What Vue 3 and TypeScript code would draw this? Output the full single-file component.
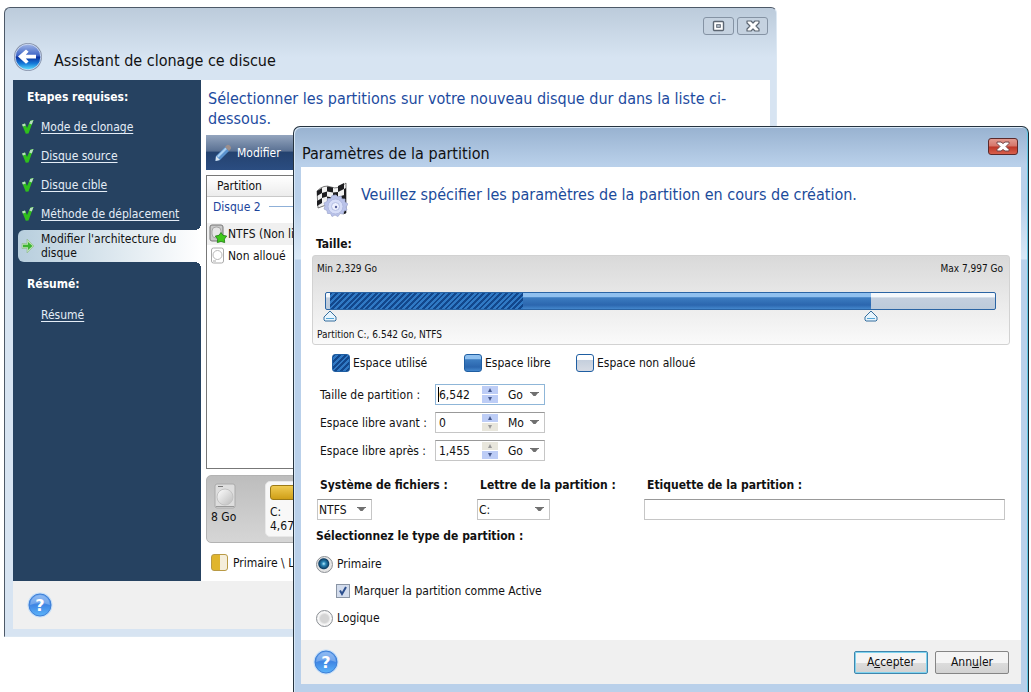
<script setup lang="ts">
import { ref, computed } from 'vue'

interface SizeField {
  id: string
  label: string
  value: string
  unit: string
  up: boolean
  down: boolean
}

const steps = ['Mode de clonage', 'Disque source', 'Disque cible', 'Méthode de déplacement']
const fields = ref<SizeField[]>([
  { id: 'size', label: 'Taille de partition :', value: '6,542', unit: 'Go', up: true, down: true },
  { id: 'before', label: 'Espace libre avant :', value: '0', unit: 'Mo', up: true, down: false },
  { id: 'after', label: 'Espace libre après :', value: '1,455', unit: 'Go', up: false, down: true },
])
const units = ['Mo', 'Go']
const total = 7.997
const used = 2.329
const start = ref(0)
const end = ref(6.542)
const usedWidth = computed(() => `${(used / total) * 100}%`)
const endWidth = computed(() => `${(end.value / total) * 100}%`)
const kind = ref('primary')
const active = ref(true)
const fileSystem = ref('NTFS')
const letter = ref('C:')
const volumeLabel = ref('')
</script>

<template>
  <main class="desktop">
    <section class="window wizard" aria-label="Assistant de clonage">
      <header class="wizard-head">
        <div class="caption">
          <button type="button" aria-label="Agrandir">
            <svg width="13" height="12" viewBox="0 0 13 12"><rect x="1.5" y="1.5" width="10" height="9" rx="1" fill="#fff" stroke="#5c6672" stroke-width="1.4" /><rect x="4.7" y="4.7" width="3.6" height="2.6" fill="#c4ced9" stroke="#5c6672" /></svg>
          </button>
          <button type="button" aria-label="Fermer">
            <svg width="14" height="12" viewBox="0 0 14 12"><path d="M1 1h4l2 2 2-2h4v2L10 6l3 3v2H9L7 9l-2 2H1V9l3-3-3-3z" fill="#fff" stroke="#5c6672" stroke-width="1.200" stroke-linejoin="round" /></svg>
          </button>
        </div>
        <div class="wizard-title">
          <button type="button" class="back" aria-label="Retour">
            <svg width="30" height="30" viewBox="0 0 30 30">
              <defs>
                <linearGradient id="bk" x1="0" y1="0" x2="0" y2="1"><stop offset="0" stop-color="#9fb4e6" /><stop offset=".46" stop-color="#3a62c4" /><stop offset=".5" stop-color="#0b2f9c" /><stop offset=".75" stop-color="#1478d8" /><stop offset="1" stop-color="#5fe2ff" /></linearGradient>
              </defs>
              <circle cx="15" cy="15" r="14" fill="#8793ab" />
              <circle cx="15" cy="15" r="12.800" fill="url(#bk)" stroke="#d6e2f6" stroke-width=".8" />
              <path d="M5 14.500 13 7.500l2.600 2.300-2.800 2.900H23v3.800H12.800l2.800 2.900-2.600 2.300z" fill="#fff" />
            </svg>
          </button>
          <h1>Assistant de clonage ce discue</h1>
        </div>
      </header>

      <div class="wizard-body">
        <nav class="sidebar">
          <h2>Etapes requises:</h2>
          <ul>
            <li v-for="s in steps" :key="s">
              <svg width="14" height="16" viewBox="0 0 14 16"><path d="M1 5.500 4 4.500 6 9 9.500 1.500 12.500 1 7.500 14.500 4.800 14.800z" fill="#2fc01c" /><path d="M9.200 2 12.500 1 10.800 5.500 8.300 4.500zM1 5.500 4 4.500 4.800 6.500 1.900 7.500z" fill="#b9dfc0" /></svg>
              <a href="#">{{ s }}</a>
            </li>
          </ul>
          <div class="current">
            <svg width="14" height="16" viewBox="0 0 14 16"><path d="M1 5.500h5V1l7 7-7 7v-4.500H1z" fill="#bfe3b7" stroke="#8ab889" stroke-width=".6" /><path d="M2 6.800h5V4l4.500 4L7 12V9.200H2z" fill="#3cb531" /></svg>
            <span>Modifier l'architecture du disque</span>
          </div>
          <h2>Résumé:</h2>
          <a class="summary" href="#">Résumé</a>
        </nav>

        <div class="content">
          <h2>Sélectionner les partitions sur votre nouveau disque dur dans la liste ci-dessous.</h2>
          <div class="toolbar">
            <button type="button">
              <svg width="18" height="18" viewBox="0 0 18 18"><path d="M2 12 11 3l4 4-9 9-4.500 1z" fill="#5b93cf" /><path d="M3 12 11.500 3.500l1.500 1.500-8.500 8.500z" fill="#a9cff2" /><path d="M11 3l2-2q1.500-.7 3 .8t.9 3L15 7z" fill="#9d8f8c" /><path d="M2 12l4 4-4.500 1z" fill="#dbe6f0" /></svg>
              Modifier
            </button>
          </div>
          <div class="list">
            <table>
              <thead><tr><th scope="col">Partition</th></tr></thead>
              <tbody>
                <tr class="group"><td><div><span>Disque 2</span><i></i></div></td></tr>
                <tr class="picked">
                  <td><div>
                    <svg width="18" height="20" viewBox="0 0 18 20"><rect x="1" y="1" width="13" height="16" rx="2" fill="#c9c9c9" stroke="#777" /><rect x="3" y="3" width="9" height="11" rx="4" fill="#e6e6e6" stroke="#a6a6a6" /><path d="m12 8.500 2 2.800 3.700.8-2.300 3 .3 3.500-3.700-1.100-3.700 1.100.3-3.500-2.300-3 3.700-.8z" fill="#3fc81b" stroke="#1f7a14" stroke-width=".8" /></svg>
                    <span>NTFS (Non libellé)</span>
                  </div></td>
                </tr>
                <tr>
                  <td><div>
                    <svg width="18" height="20" viewBox="0 0 18 20"><rect x="2.500" y="2" width="12" height="15" rx="2" fill="#fff" stroke="#aaa" /><circle cx="8.500" cy="9" r="4.500" fill="#fff" stroke="#b8b8b8" /><path d="M4 15h3" stroke="#aaa" /></svg>
                    <span>Non alloué</span>
                  </div></td>
                </tr>
              </tbody>
            </table>
          </div>
          <div class="disk">
            <div class="disk-name">
              <svg width="22" height="26" viewBox="0 0 22 26"><defs><linearGradient id="dk" x1="0" y1="0" x2="1" y2="1"><stop offset="0" stop-color="#fff" /><stop offset="1" stop-color="#bbb" /></linearGradient></defs><rect x="1" y="1" width="20" height="24" rx="2" fill="#dedede" stroke="#aaa" /><circle cx="11" cy="14" r="8" fill="url(#dk)" stroke="#c3c3c3" /><path d="M4 3.500h5" stroke="#777" /><path d="M2 23.500h18" stroke="#999" /></svg>
              <span>8 Go</span>
            </div>
            <div class="volume"><b></b><span>C:</span><span>4,67 Go</span></div>
          </div>
          <div class="key"><i></i><span>Primaire \ Logique</span></div>
        </div>
      </div>
      <footer>
        <button type="button" class="help" aria-label="Aide">
          <svg width="26" height="26" viewBox="0 0 26 26">
            <defs><linearGradient id="hp" x1="0" y1="0" x2="0" y2="1"><stop offset="0" stop-color="#6ea6ef" /><stop offset=".5" stop-color="#3f86e4" /><stop offset="1" stop-color="#5cb4fa" /></linearGradient></defs>
            <circle cx="13" cy="13" r="12.500" fill="#c4def8" /><circle cx="13" cy="13" r="11" fill="url(#hp)" stroke="#3e7fd6" /><path d="M3 13a10 10 0 0 1 20 0q-10-4-20 0z" fill="#fff" opacity=".25" />
            <text x="13" y="19" text-anchor="middle" class="q">?</text>
          </svg>
        </button>
      </footer>
    </section>

    <section class="window dialog" role="dialog" aria-labelledby="dlg-title">
      <header class="dialog-head">
        <h1 id="dlg-title">Paramètres de la partition</h1>
        <button type="button" class="close" aria-label="Fermer">
          <svg width="14" height="11" viewBox="0 0 14 11"><path d="M1 1h4l2 1.500L9 1h4v1.500L10 5.500l3 3V10H9L7 8.500 5 10H1V8.500l3-3-3-3z" fill="#fff" stroke="#73474a" stroke-width="1" stroke-linejoin="round" /></svg>
        </button>
      </header>

      <form class="dialog-body" @submit.prevent>
        <div class="intro">
          <svg width="32" height="36" viewBox="0 0 32 36">
            <path d="M1 9Q8 2 15 5T30 1V31L27 32V22Q20 23 14 23T2 26z" fill="#f2f2f2" stroke="#444" stroke-width=".7" />
            <path d="M1 9 6 6v5L1 14zM11 4.500l6 1v5l-6-1zM22 4l6-3v6l-6 3zM6 11l5-1.500v5L6 16zM17 10.500l5-.5v5l-5 .5zM1 19l5-3v5l-5 3zM11 14.500l6 1v5l-6-.5zM22 15l6-2v6l-6 2zM28 7l2-1v25l-2 1z" fill="#1d1d20" />
            <path d="m20 13 2 2 3-1 1 3 3 0v3l3 2-2 3 1 3-3 1-1 3-3-.5-2 3-3-1.500-3 1.500-1.500-3-3 0-.5-3-3-1.500 1-3-1-3 3-1.500.5-3 3 0 1.500-3z" fill="#b9c2ea" stroke="#a3acd2" stroke-width=".8" />
            <circle cx="19.500" cy="24.500" r="7.500" fill="#d6ddf8" stroke="#b0b9e0" /><circle cx="19.500" cy="24.500" r="4" fill="#eef1ff" stroke="#b4bee3" /><circle cx="20" cy="25" r="1.200" fill="#59629a" />
          </svg>
          <p>Veuillez spécifier les paramètres de la partition en cours de création.</p>
        </div>

        <h2 class="size-title">Taille:</h2>
        <div class="size-panel">
          <div class="limits"><span>Min 2,329 Go</span><span>Max 7,997 Go</span></div>
          <div class="bar-wrap">
            <div class="bar">
              <div class="scale">
                <div class="free" :style="{ width: endWidth }"></div>
                <div class="used" :style="{ width: usedWidth }"></div>
              </div>
            </div>
            <div class="handles">
              <input v-model.number="start" type="range" min="0" :max="total" step="0.001" aria-label="Début de la partition" />
              <input v-model.number="end" type="range" min="0" :max="total" step="0.001" aria-label="Fin de la partition" />
            </div>
          </div>
          <p>Partition C:, 6.542 Go, NTFS</p>
        </div>

        <ul class="legend">
          <li><i class="sw-used"></i>Espace utilisé</li>
          <li><i class="sw-free"></i>Espace libre</li>
          <li><i class="sw-none"></i>Espace non alloué</li>
        </ul>

        <div class="sizes">
          <div v-for="f in fields" :key="f.id" class="size-row">
            <label :for="f.id">{{ f.label }}</label>
            <div class="spin" :class="{ focused: f.id === 'size' }">
              <span v-if="f.id === 'size'" class="caret"></span>
              <input :id="f.id" v-model="f.value" type="text" />
              <span class="arrows">
                <button type="button" :class="{ off: !f.up }" aria-label="Augmenter"><svg width="6" height="4" viewBox="0 0 6 4"><path d="M3 0 5 4H1z" /></svg></button>
                <button type="button" :class="{ off: !f.down }" aria-label="Diminuer"><svg width="6" height="4" viewBox="0 0 6 4"><path d="M3 4 5 0H1z" /></svg></button>
              </span>
              <select v-model="f.unit" :aria-label="'Unité, ' + f.label"><option v-for="u in units" :key="u">{{ u }}</option></select>
            </div>
          </div>
        </div>

        <div class="props">
          <div class="prop"><label for="fs">Système de fichiers :</label><select id="fs" v-model="fileSystem" class="boxed fs"><option>NTFS</option><option>FAT32</option></select></div>
          <div class="prop"><label for="letter">Lettre de la partition :</label><select id="letter" v-model="letter" class="boxed letter"><option>C:</option><option>D:</option></select></div>
          <div class="prop wide"><label for="vol">Etiquette de la partition :</label><input id="vol" v-model="volumeLabel" type="text" class="boxed" /></div>
        </div>

        <fieldset>
          <legend>Sélectionnez le type de partition :</legend>
          <label class="opt"><input v-model="kind" type="radio" value="primary" name="kind" />Primaire</label>
          <label class="opt sub"><input v-model="active" type="checkbox" />Marquer la partition comme Active</label>
          <label class="opt"><input v-model="kind" type="radio" value="logical" name="kind" />Logique</label>
        </fieldset>
      </form>

      <footer>
        <button type="button" class="help" aria-label="Aide">
          <svg width="26" height="26" viewBox="0 0 26 26">
            <circle cx="13" cy="13" r="12.500" fill="#c4def8" /><circle cx="13" cy="13" r="11" fill="url(#hp)" stroke="#3e7fd6" /><path d="M3 13a10 10 0 0 1 20 0q-10-4-20 0z" fill="#fff" opacity=".25" />
            <text x="13" y="19" text-anchor="middle" class="q">?</text>
          </svg>
        </button>
        <div class="actions">
          <button type="button" class="btn primary">A<u>c</u>cepter</button>
          <button type="button" class="btn">Ann<u>u</u>ler</button>
        </div>
      </footer>
    </section>
  </main>
</template>

<style>
html,
body {
  margin: 0;
  background: #fff;
}
</style>

<style scoped>
* {
  box-sizing: border-box;
}
.desktop {
  position: relative;
  min-height: 100vh;
  overflow: hidden;
  font: 12px/16px "DejaVu Sans Condensed", "DejaVu Sans", sans-serif;
  color: #111;
}
h1, h2, p, ul {
  margin: 0;
  padding: 0;
  font-size: inherit;
  font-weight: normal;
}
ul {
  list-style: none;
}
button, input, select {
  margin: 0;
  padding: 0;
  border: 0;
  background: none;
  font: inherit;
  color: inherit;
  outline: 0;
}
svg {
  display: block;
  flex: none;
}
.window {
  position: absolute;
  display: flex;
  flex-direction: column;
}
.window h1 {
  font-size: 16px;
  line-height: 20px;
}
footer {
  display: flex;
  align-items: center;
  background: #f0f0f0;
}
.q {
  font: bold 16px "DejaVu Sans", sans-serif;
  fill: #fff;
}

.wizard {
  top: 7px;
  bottom: 55px;
  left: 4px;
  width: 75%;
  padding: 0 6px 7px 8px;
  border: 1px solid #4d5968;
  border-right-color: #dce8f3;
  border-bottom-color: #dce8f3;
  border-radius: 6px 6px 0 0;
  background: linear-gradient(#bccbdb, #d7e4f2 50px, #d7e4f2);
}
.wizard-head {
  height: 72px;
}
.caption {
  display: flex;
  justify-content: flex-end;
  gap: 3px;
  padding: 9px 2px 0;
}
.caption button {
  display: grid;
  place-items: center;
  width: 31px;
  height: 18px;
  border: 1px solid #8593a4;
  border-radius: 3px;
  background: #c5d2e0;
}
.wizard-title {
  display: flex;
  align-items: center;
  gap: 11px;
  margin-top: 7px;
}
.wizard-title h1 {
  padding-top: 7px;
}
.wizard-body {
  display: flex;
  flex: 1;
  min-height: 0;
  background: #fff;
}
.sidebar {
  flex: none;
  width: 188px;
  padding: 9px 0 0 5px;
  background: #264261;
  color: #fff;
}
.sidebar h2 {
  padding-left: 9px;
  font-weight: bold;
}
.sidebar ul {
  display: grid;
  gap: 13px;
  padding: 14px 0 8px 3px;
}
.sidebar li {
  display: flex;
  gap: 6px;
}
.sidebar a {
  color: #e4edf7;
  text-underline-offset: 2px;
}
.current {
  position: relative;
  display: flex;
  align-items: center;
  gap: 6px;
  margin-bottom: 14px;
  padding: 2px 12px 2px 3px;
  border-radius: 6px 0 0 6px;
  background: linear-gradient(90deg, #b7cedd, #fff);
  line-height: 14px;
  color: #111;
}
.current::before,
.current::after {
  content: "";
  position: absolute;
  right: 0;
  width: 6px;
  height: 6px;
}
.current::before {
  bottom: 100%;
  background: radial-gradient(circle at 0 0, #264261 6px, #fff 6px);
}
.current::after {
  top: 100%;
  background: radial-gradient(circle at 0 100%, #264261 6px, #fff 6px);
}
.summary {
  display: inline-block;
  margin: 15px 0 0 23px;
}
.content {
  display: flex;
  flex: 1;
  flex-direction: column;
  min-width: 0;
  padding: 9px 6px 10px 5px;
}
.content h2 {
  padding: 0 20px 0 2px;
  font-size: 16px;
  line-height: 20px;
  color: #1d4ba0;
}
.toolbar {
  display: flex;
  margin-top: 6px;
  height: 35px;
  background: linear-gradient(#94a5be, #5b7294 45%, #24426f 50%, #2b4d81);
}
.toolbar button {
  display: flex;
  align-items: center;
  gap: 5px;
  padding-left: 8px;
  color: #fff;
}
.list {
  flex: 1;
  margin-top: 5px;
  border: 1px solid #777;
}
.list table {
  width: 100%;
  border-collapse: collapse;
}
.list th,
.list td {
  height: 22px;
  padding: 0;
  font-weight: normal;
  text-align: left;
}
.list th {
  height: 20px;
  padding-left: 10px;
  border-bottom: 1px solid #c9c9c9;
  background: linear-gradient(#fff, #ececec);
}
.list td div {
  display: flex;
  align-items: center;
  gap: 1px;
  padding-left: 2px;
}
.list .group div {
  gap: 8px;
}
.list .group td {
  height: 27px;
  padding: 0 0 6px 4px;
  color: #1c449c;
}
.group i {
  flex: 1;
  height: 1px;
  background: #8fb0d8;
}
.picked {
  background: #f0f0f0;
}
.disk {
  display: flex;
  gap: 26px;
  margin-top: 6px;
  padding: 5px 4px;
  height: 68px;
  border: 1px solid #b3b3b3;
  border-radius: 5px;
  background: linear-gradient(#bdbdbd, #d6d6d6);
}
.disk-name {
  flex: none;
}
.disk-name svg {
  margin: 2px 3px 0;
}
.volume {
  display: flex;
  flex: 1;
  flex-direction: column;
  padding: 3px 4px;
  border: 1px solid #e8e8e8;
  border-radius: 5px;
  background: #f8f8f8;
  line-height: 14px;
}
.volume b {
  height: 18px;
  margin-bottom: 5px;
  border: 1px solid #9b7a17;
  border-radius: 3px;
  background: linear-gradient(#f0cb52, #cf9f17);
}
.key {
  display: flex;
  align-items: center;
  gap: 5px;
  margin: 11px 0 0 5px;
}
.key i {
  width: 17px;
  height: 17px;
  border: 1px solid #b99a45;
  border-radius: 3px;
  background: linear-gradient(90deg, #e0b52d 50%, #f5eedb 50%);
}
.wizard footer {
  height: 48px;
  padding-left: 14px;
}

.dialog {
  top: 126px;
  right: 2px;
  left: 293px;
  min-height: calc(100% - 126px);
  padding: 0 7px 8px;
  border: 1px solid #26333f;
  border-right: 1px solid #1f2a33;
  border-bottom: 0;
  border-radius: 7px 7px 0 0;
  background: linear-gradient(#98b2d0, #b9d0ea 38px, #b9d0ea 75px, #d9e8f7 132px, #b9d0ea 133px);
  box-shadow: inset 1px 1px #d7e7f6, inset -1px 0 #62c8e4;
}
.dialog-head {
  display: flex;
  align-items: flex-start;
  justify-content: space-between;
  height: 40px;
  padding: 11px 3px 0 1px;
}
.dialog-head h1 {
  padding-top: 6px;
}
.close {
  display: grid;
  place-items: center;
  width: 30px;
  height: 17px;
  border: 1px solid #5b2a2b;
  border-radius: 3px;
  background: linear-gradient(#e29a90, #d57468 48%, #bd3526 52%, #d8604c);
}
.dialog-body {
  flex: 1;
  padding: 15px 11px 0;
  background: #fff;
}
.intro {
  display: flex;
  gap: 13px;
  padding-left: 4px;
}
.intro p {
  padding-top: 3px;
  font-size: 16px;
  line-height: 20px;
  color: #1b4b9b;
}
.size-title {
  margin: 18px 0 3px 4px;
}
.size-title,
.prop label,
legend {
  font-weight: bold;
}
.size-panel {
  padding: 6px 4px 2px;
  border: 1px solid #d2d2d2;
  border-radius: 3px;
  background: linear-gradient(#d9d9d9, #fafafa);
  font-size: 10px;
  line-height: 14px;
}
.limits {
  display: flex;
  justify-content: space-between;
  padding-right: 2px;
}
.bar-wrap {
  margin: 16px 9px 6px 8px;
}
.bar {
  height: 18px;
  padding: 0 4px;
  border: 1px solid #2a64a4;
  border-radius: 2px;
  background: linear-gradient(#f4f8fc 25%, #c3cfde 30%, #bccada);
}
.scale {
  position: relative;
  height: 16px;
}
.free,
.used {
  position: absolute;
  top: 0;
  left: 0;
  height: 100%;
}
.free,
.sw-free {
  background: linear-gradient(#8fc0ef 22%, #3c7cc0 30%, #2b66ae 75%, #4487cc);
}
.used,
.sw-used {
  background: repeating-linear-gradient(135deg, #12478c 0 2px, #3079c4 2px 4px);
}
.handles {
  display: grid;
  margin: 0 -2px;
}
.handles input {
  grid-area: 1 / 1;
  width: 100%;
  height: 12px;
  appearance: none;
  pointer-events: none;
}
.handles input::-webkit-slider-thumb {
  width: 14px;
  height: 12px;
  appearance: none;
  pointer-events: auto;
  background: url("data:image/svg+xml,%3Csvg xmlns='http://www.w3.org/2000/svg' width='14' height='12'%3E%3Cpath d='M7 1 13 7v3l-1 1H2L1 10V7z' fill='%23e6f4fd' stroke='%23366f9e'/%3E%3Cpath d='M3 8.500h8' stroke='%2356a5d5'/%3E%3C/svg%3E");
}
.legend {
  display: grid;
  grid-template-columns: 132px 112px auto;
  margin: 9px 0 0 20px;
}
.legend li {
  display: flex;
  align-items: center;
  gap: 3px;
}
.legend i {
  width: 18px;
  height: 18px;
  border: 1px solid #1f5ea2;
  border-radius: 3px;
}
.sw-none {
  background: linear-gradient(#fff 28%, #c5cfdd 32%, #d6dbe4);
}
.sizes {
  display: grid;
  gap: 7px;
  margin: 12px 0 0 8px;
}
.size-row {
  display: flex;
  align-items: center;
}
.size-row label {
  width: 115px;
}
.spin,
.boxed {
  height: 21px;
  border: 1px solid #c6c6c6;
  border-top-color: #999;
  background-color: #fff;
}
.spin {
  display: flex;
  position: relative;
  width: 110px;
}
.spin.focused {
  border-color: #8fb6d8;
}
.caret {
  position: absolute;
  top: 2px;
  left: 2px;
  width: 1px;
  height: 15px;
  background: #000;
}
.spin input {
  width: 46px;
  padding-left: 3px;
}
.arrows {
  display: grid;
  align-content: center;
  gap: 1px;
  width: 16px;
}
.arrows button {
  display: grid;
  place-items: center;
  height: 8px;
  background: #bdcdf6;
  fill: #44588e;
}
.arrows .off {
  background: #e8e6dc;
  fill: #999;
}
select {
  appearance: none;
  background: url("data:image/svg+xml,%3Csvg xmlns='http://www.w3.org/2000/svg' width='9' height='5'%3E%3Cpath d='M0 0h9v1H8L5.500 4h-2L1 1H0z' fill='%23707070'/%3E%3C/svg%3E") no-repeat right 5px center;
}
.spin select {
  flex: 1;
  padding-left: 10px;
}
.props {
  display: flex;
  margin-top: 16px;
  padding-left: 5px;
}
.prop {
  display: grid;
  flex: none;
  gap: 6px;
  width: 160px;
}
.prop + .prop {
  width: 167px;
}
.prop label {
  padding-left: 3px;
}
.prop.wide {
  flex: 1;
}
.boxed {
  padding-left: 1px;
}
.fs {
  width: 55px;
}
.letter {
  width: 73px;
}
.wide .boxed {
  width: calc(100% - 5px);
}
fieldset {
  display: grid;
  gap: 9px;
  margin: 8px 0 0 4px;
  padding: 0;
  border: 0;
}
legend {
  margin-bottom: 11px;
  padding: 0;
}
.opt {
  display: flex;
  align-items: center;
  gap: 4px;
  height: 18px;
}
.sub {
  margin-left: 20px;
}
input[type="radio"] {
  width: 17px;
  height: 17px;
  appearance: none;
  border: 1px solid #8b8f94;
  border-radius: 50%;
  background: radial-gradient(circle, #d4d4d4 0 4px, #f6f6f6 6px);
}
input[type="radio"]:checked {
  background: radial-gradient(circle at 45% 45%, #b6ecff 0, #2a87b8 2px, #0e3f66 5px, #e4e4e4 6px);
}
input[type="checkbox"] {
  width: 14px;
  height: 14px;
  appearance: none;
  border: 1px solid #8a95a5;
  background: #d9e1ee;
}
input[type="checkbox"]:checked {
  background: #d3dcec url("data:image/svg+xml,%3Csvg xmlns='http://www.w3.org/2000/svg' width='12' height='12'%3E%3Cpath d='M3 5.500 5 9 9 2' fill='none' stroke='%232c4f8e' stroke-width='2'/%3E%3C/svg%3E");
}
.dialog footer {
  justify-content: space-between;
  height: 44px;
  padding: 0 12px;
}
.actions {
  display: flex;
  gap: 7px;
}
.btn {
  width: 74px;
  height: 23px;
  border: 1px solid #858585;
  border-radius: 2px;
  background: linear-gradient(#f4f4f4 50%, #dcdcdc 52%, #d2d2d2);
}
.btn.primary {
  border-color: #4086ad;
  box-shadow: inset 0 0 0 1px #7fd3ef;
}
</style>
